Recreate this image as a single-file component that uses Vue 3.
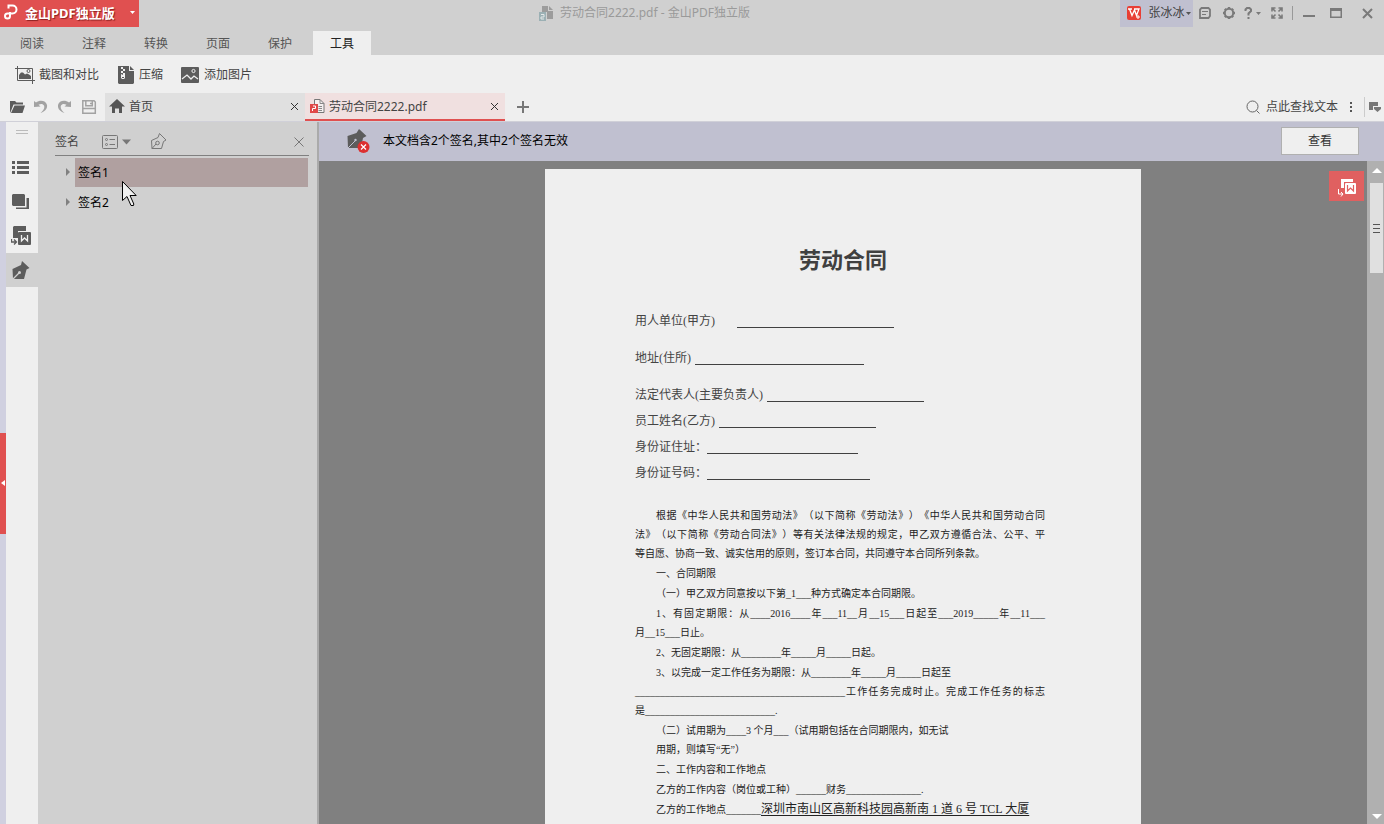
<script setup>
import { ref } from 'vue'

const menus = ['阅读', '注释', '转换', '页面', '保护', '工具']
const activeMenu = ref('工具')
const signatures = ['签名1', '签名2']
const selected = ref('签名1')

// Blank lines of the contract header; widths in pixels
const fields = [
  { label: '用人单位(甲方)', at: 102, blank: 157, space: true },
  { label: '地址(住所)', at: 60, blank: 169, space: true },
  { label: '法定代表人(主要负责人)', at: 132, blank: 157 },
  { label: '员工姓名(乙方)', at: 84, blank: 157 },
  { label: '身份证住址：', at: 72, blank: 151 },
  { label: '身份证号码：', at: 72, blank: 163 },
]

const u = (n) => '_'.repeat(n)
const clauses = [
  {
    lines: [
      { t: '根据《中华人民共和国劳动法》（以下简称《劳动法》）《中华人民共和国劳动合同', indent: true, full: true },
      { t: '法》（以下简称《劳动合同法》）等有关法律法规的规定，甲乙双方遵循合法、公平、平', full: true },
      { t: '等自愿、协商一致、诚实信用的原则，签订本合同，共同遵守本合同所列条款。' },
    ],
  },
  { lines: [{ t: '一、合同期限', indent: true }] },
  { lines: [{ t: `（一）甲乙双方同意按以下第_1${u(3)}种方式确定本合同期限。`, indent: true }] },
  {
    lines: [
      { t: `1、有固定期限：从${u(4)}2016${u(4)}年${u(3)}11__月__15${u(3)}日起至${u(3)}2019${u(5)}年__11${u(3)}`, indent: true, full: true },
      { t: `月__15${u(3)}日止。` },
    ],
  },
  { lines: [{ t: `2、无固定期限：从${u(8)}年${u(5)}月${u(5)}日起。`, indent: true }] },
  {
    lines: [
      { t: `3、以完成一定工作任务为期限：从${u(8)}年${u(5)}月${u(5)}日起至`, indent: true },
      { t: `${u(42)}工作任务完成时止。完成工作任务的标志`, full: true },
      { t: `是${u(26)}.` },
    ],
  },
  {
    lines: [
      { t: `（二）试用期为${u(4)}3 个月${u(3)}（试用期包括在合同期限内，如无试`, indent: true },
      { t: '用期，则填写“无”）', indent: true },
    ],
  },
  { lines: [{ t: '二、工作内容和工作地点', indent: true }] },
  { lines: [{ t: `乙方的工作内容（岗位或工种）${u(6)}财务${u(15)}.`, indent: true }] },
  { lines: [{ t: `乙方的工作地点${u(7)}`, indent: true, fill: '深圳市南山区高新科技园高新南 1 道 6 号 TCL 大厦' }] },
]
</script>

<template>
  <div class="app">
    <header class="titlebar">
      <button class="brand">
        <svg width="14" height="17" viewBox="0 0 14 17" fill="none" stroke="#fff" stroke-width="2">
          <path d="M4.500 4.500V1.500H8.500A4 4 0 0 1 8.500 9.500H3.500A2.500 2.500 0 1 0 6 12V8" />
        </svg>
        <span>金山PDF独立版</span>
        <svg class="brand-caret" width="5" height="3" viewBox="0 0 5 3"><path d="M0 0H5L2.500 3Z" fill="#fff" /></svg>
      </button>
      <div class="window-title">
        <svg width="15" height="15" viewBox="0 0 15 15">
          <path d="M3 0H9V5H14V13H8V6H3ZM10 0L14 4H10Z" fill="#9c9c9c" />
          <path d="M0 6H7V15H0Z" fill="#9bb0b4" />
          <path d="M2 8.500H5V11H2V13H5" fill="none" stroke="#e4e8e8" />
        </svg>
        <span>劳动合同2222.pdf - 金山PDF独立版</span>
      </div>
      <button class="user">
        <svg width="14" height="14" viewBox="0 0 14 14">
          <rect width="14" height="14" rx="2" fill="#e83e36" />
          <path d="M1 3H5M2.500 3L5 9.500L7.500 4L9.500 9.500L12 3H7" fill="none" stroke="#fff" stroke-width="1.300" />
          <path d="M11 9V13M9 11H13" stroke="#fff" />
        </svg>
        <span>张冰冰</span>
        <svg width="5" height="3" viewBox="0 0 5 3"><path d="M0 0H5L2.500 3Z" fill="#555" /></svg>
      </button>
      <button class="tool" aria-label="消息">
        <svg width="12" height="12" viewBox="0 0 12 12" fill="none" stroke="#7a7a7a">
          <path d="M1 11V2.500L2.500 1H9.500L11 2.500V9L9.500 11Z" stroke-width="1.800" />
          <path d="M3 4.500H9M3 7.500H7" />
        </svg>
      </button>
      <button class="tool" aria-label="设置">
        <svg width="14" height="14" viewBox="0 0 14 14" fill="none" stroke="#7a7a7a">
          <circle cx="7" cy="7" r="4.200" stroke-width="2" />
          <path d="M7 1V3M7 11V13M1 7H3M11 7H13M2.800 2.800L4 4M10 10L11.200 11.200M2.800 11.200L4 10M10 4L11.200 2.800" stroke-width="2.400" />
        </svg>
      </button>
      <button class="tool" aria-label="帮助">
        <svg width="18" height="12" viewBox="0 0 18 12">
          <path d="M1.500 4V2.500L3 1H5.500L7 2.500V4L4.500 6.500V8.500" fill="none" stroke="#7a7a7a" stroke-width="2" />
          <path d="M3.500 10H5.500V12H3.500ZM12 5H17L14.500 8Z" fill="#7a7a7a" />
        </svg>
      </button>
      <button class="tool" aria-label="全屏">
        <svg width="12" height="12" viewBox="0 0 12 12" fill="none" stroke="#7a7a7a" stroke-width="1.600">
          <path d="M1 4.500V1H4.500M1 1L4.500 4.500M7.500 1H11V4.500M11 1L7.500 4.500M1 7.500V11H4.500M1 11L4.500 7.500M7.500 11H11V7.500M11 11L7.500 7.500" />
        </svg>
      </button>
      <span class="bar-sep"></span>
      <button class="win" aria-label="最小化">
        <svg width="12" height="11" viewBox="0 0 12 11"><path d="M0 7H12V9H0Z" fill="#7a7a7a" /></svg>
      </button>
      <button class="win" aria-label="最大化">
        <svg width="12" height="11" viewBox="0 0 12 11"><path d="M0 0H12V10H0ZM1.500 3V8.500H10.500V3Z" fill="#7a7a7a" fill-rule="evenodd" /></svg>
      </button>
      <button class="win last" aria-label="关闭">
        <svg width="11" height="11" viewBox="0 0 11 11"><path d="M1 1L10 10M10 1L1 10" stroke="#7a7a7a" stroke-width="2" /></svg>
      </button>
    </header>

    <nav class="menu">
      <button v-for="m in menus" :key="m" :class="{ active: m === activeMenu }" @click="activeMenu = m">{{ m }}</button>
    </nav>

    <div class="ribbon">
      <button>
        <svg width="20" height="19" viewBox="0 0 20 19">
          <path d="M0 3.500H17.500V19M2.500 1V15.500H20" fill="none" stroke="#5c5c5c" />
          <path d="M4 14V10L6 7.500H8L10 9.500L12 8.500L14 9.500L16 11V14Z" fill="#5c5c5c" />
          <circle cx="13.500" cy="6" r="1.500" fill="none" stroke="#5c5c5c" />
        </svg>
        截图和对比
      </button>
      <button>
        <svg width="18" height="18" viewBox="0 0 18 18">
          <path d="M1 0H12V5H17V17L16 18H2L1 17ZM13 0L17 4H13Z" fill="#5c5c5c" />
          <path d="M4 1H6V3H4ZM6 3H8V5H6ZM4 5H6V7H4ZM6 7H8V9H6Z" fill="#efefef" />
          <path d="M4 8L6 9H8V12L7 13H5L4 12Z" fill="#efefef" />
          <path d="M5 11.500H7" stroke="#5c5c5c" />
        </svg>
        压缩
      </button>
      <button>
        <svg width="19" height="16" viewBox="0 0 19 16">
          <rect x="0" y="0" width="18" height="16" rx="1" fill="#5c5c5c" />
          <path d="M1 12L6 8L10 12L13 9L17 12" fill="none" stroke="#efefef" stroke-width="1.300" />
          <circle cx="12.500" cy="4" r="1.600" fill="none" stroke="#efefef" />
        </svg>
        添加图片
      </button>
    </div>

    <div class="tabs-row">
      <div class="quick">
        <button aria-label="打开">
          <svg width="15" height="15" viewBox="0 0 15 15"><path d="M0 13V1H5L6.500 2.500H13V4.500H3.500L1 11ZM4.500 5.500H15L12.500 13H1Z" fill="#5c5c5c" /></svg>
        </button>
        <button aria-label="撤销">
          <svg width="15" height="15" viewBox="0 0 15 15"><path d="M0 1L2 2.500C6 -0.500 12 0.500 13 5C13.600 8.500 11 11.500 6.500 13C9.500 10.500 11 8 10 5.500C9 3.500 6.500 3.500 4.500 4.800L6.500 6.500L0 7Z" fill="#a2a2a2" /></svg>
        </button>
        <button aria-label="重做">
          <svg width="15" height="15" viewBox="0 0 15 15"><path d="M13 1L11 2.500C7 -0.500 1 0.500 0 5C-0.600 8.500 2 11.500 6.500 13C3.500 10.500 2 8 3 5.500C4 3.500 6.500 3.500 8.500 4.800L6.500 6.500L13 7Z" fill="#a2a2a2" /></svg>
        </button>
        <button aria-label="保存">
          <svg width="15" height="15" viewBox="0 0 15 15" fill="none" stroke="#a2a2a2" stroke-width="1.500">
            <path d="M0.800 0.800H12L13.300 2V13.300H0.800ZM3.800 1V5.800H10.300V1M1 8.500H13" /><path d="M8 3.500H10" />
          </svg>
        </button>
      </div>
      <div class="tab">
        <svg width="16" height="15" viewBox="0 0 16 15"><path d="M8 0L16 7.500H13V14H10V9.500H6V14H3V7.500H0Z" fill="#555" /></svg>
        <a href="#">首页</a>
        <button aria-label="关闭首页"><svg width="9" height="9" viewBox="0 0 9 9"><path d="M1 1L8 8M8 1L1 8" stroke="#333" /></svg></button>
      </div>
      <div class="tab current">
        <svg width="15" height="15" viewBox="0 0 15 15">
          <path d="M4.500 6V0.500H10L14 4.500V13.500H7" fill="#f5f0f0" stroke="#777" />
          <path d="M10 0.500V4.500H14M8.500 7.500H12M8.500 9.500H12M8.500 11.500H12" fill="none" stroke="#888" />
          <path d="M0 5H8V14H0Z" fill="#e04848" />
          <path d="M2.500 12V9.500H5.500V7H3" fill="none" stroke="#fff" />
        </svg>
        <a href="#">劳动合同2222.pdf</a>
        <button aria-label="关闭文档"><svg width="9" height="9" viewBox="0 0 9 9"><path d="M1 1L8 8M8 1L1 8" stroke="#333" /></svg></button>
      </div>
      <button class="add" aria-label="新建标签">
        <svg width="12" height="12" viewBox="0 0 12 12"><path d="M6 0V12M0 6H12" stroke="#777" stroke-width="2" /></svg>
      </button>
      <button class="search">
        <svg width="14" height="14" viewBox="0 0 14 14" fill="none" stroke="#666"><circle cx="6.500" cy="6.500" r="5.500" /><path d="M10.500 10.500L13.500 13.500" /></svg>
        点此查找文本
      </button>
      <button class="more" aria-label="更多"><svg width="2" height="10" viewBox="0 0 2 10"><path d="M0 0H2V2H0ZM0 4H2V6H0ZM0 8H2V10H0Z" fill="#555" /></svg></button>
      <button class="pin" aria-label="收起">
        <svg width="12" height="11" viewBox="0 0 12 11"><path d="M0 0H9V4H4V8H0ZM5 5H12V7L8.500 10L5 7Z" fill="#777" /></svg>
      </button>
    </div>

    <div class="body">
      <div class="edge">
        <button aria-label="展开"><svg width="4" height="6" viewBox="0 0 4 6"><path d="M4 0V6L0 3Z" fill="#fff" /></svg></button>
      </div>
      <div class="rail">
        <span class="grip"></span>
        <button aria-label="目录">
          <svg width="18" height="14" viewBox="0 0 18 14"><path d="M0 0H3V3H0ZM5 0H17V3H5ZM0 5H3V8H0ZM5 5H17V8H5ZM0 10H3V13H0ZM5 10H17V13H5Z" fill="#5c5c5c" /></svg>
        </button>
        <button aria-label="缩略图">
          <svg width="18" height="16" viewBox="0 0 18 16"><path d="M1 0H12L13 1V12H1L0 11V1ZM14.500 4H17V15H4V13.500H14.500Z" fill="#5c5c5c" /></svg>
        </button>
        <button aria-label="转换为文档">
          <svg width="20" height="20" viewBox="0 0 20 20">
            <path d="M3 0H15V5H7V12H2V1Z" fill="#5c5c5c" /><rect x="7" y="6" width="13" height="13" rx="1" fill="#5c5c5c" />
            <path d="M10.500 9V15L13.500 12L16.500 15V9" fill="none" stroke="#efefef" stroke-width="1.300" />
            <path d="M0.500 13V16H5M3 13.500L5.500 16L3 18.500" fill="none" stroke="#5c5c5c" stroke-width="1.300" />
          </svg>
        </button>
        <button class="active" aria-label="签名">
          <svg width="18" height="18" viewBox="0 0 18 18">
            <path d="M10 0L17.500 7L14.500 8.500L12 18H1L0.500 8L9 4Z" fill="#5c5c5c" /><path d="M1 18L7 12" stroke="#d0d0d0" stroke-width="1.300" /><circle cx="7.500" cy="11.500" r="1.500" fill="#d0d0d0" />
          </svg>
        </button>
      </div>

      <aside class="panel">
        <div class="panel-head">
          <span>签名</span>
          <button class="list-btn" aria-label="选项">
            <svg width="30" height="14" viewBox="0 0 30 14" fill="none" stroke="#777">
              <rect x="0.500" y="0.500" width="15" height="13" rx="1" /><circle cx="4.500" cy="4.500" r="1" /><circle cx="4.500" cy="9.500" r="1" /><path d="M7.500 4.500H13M7.500 9.500H13" />
              <path d="M20 4.500H29L24.500 9.500Z" fill="#777" stroke="none" />
            </svg>
          </button>
          <button class="pen-btn" aria-label="添加签名">
            <svg width="16" height="17" viewBox="0 0 16 17" fill="none" stroke="#777">
              <path d="M8.500 0.500L15 7L12.500 8.500L10.500 15.500H1L0.500 7.500L7 4.500ZM1 15.500L5 11" /><circle cx="6.500" cy="10" r="1.800" />
            </svg>
          </button>
          <button class="panel-close" aria-label="关闭面板"><svg width="10" height="10" viewBox="0 0 10 10"><path d="M0.500 0.500L9.500 9.500M9.500 0.500L0.500 9.500" stroke="#777" /></svg></button>
        </div>
        <ul class="signs">
          <li v-for="s in signatures" :key="s">
            <svg width="4" height="8" viewBox="0 0 4 8"><path d="M0 0L4 4L0 8Z" fill="#808080" /></svg>
            <button :class="{ selected: s === selected }" @click="selected = s">{{ s }}</button>
          </li>
        </ul>
        <svg class="cursor" width="15" height="26" viewBox="0 0 15 26">
          <path d="M0.500 0.500V19.500L5 15.500L9 24.500H11.500L11.800 23L8 14.500H14.200Z" fill="#f0f0f0" stroke="#000" />
        </svg>
      </aside>

      <main class="main">
        <div class="notice">
          <svg width="23" height="24" viewBox="0 0 23 24">
            <path d="M12 0L19.500 7L16 9L14 19H1L0.500 7L9.500 4Z" fill="#5c5c5c" /><path d="M1 19L8 12" stroke="#c0c0d0" /><circle cx="8.500" cy="11" r="1.200" fill="#c0c0d0" />
            <circle cx="16.500" cy="18" r="6" fill="#dc3030" /><path d="M14 15.500L19 20.500M19 15.500L14 20.500" stroke="#fff" stroke-width="1.200" />
          </svg>
          <span>本文档含2个签名,其中2个签名无效</span>
          <button>查看</button>
        </div>
        <div class="viewer">
          <div class="canvas">
            <article class="page">
              <h1>劳动合同</h1>
              <div class="form">
                <div v-for="f in fields" :key="f.label" class="field" :class="{ spaced: f.space }">
                  <span class="label" :style="{ width: f.at + 'px' }">{{ f.label }}</span>
                  <span class="blank" :style="{ width: f.blank + 'px' }"></span>
                </div>
              </div>
              <div class="clauses">
                <p v-for="(c, i) in clauses" :key="i">
                  <span v-for="(l, j) in c.lines" :key="j" class="line" :class="{ indent: l.indent, full: l.full }">{{ l.t }}<u v-if="l.fill">{{ l.fill }}</u></span>
                </p>
                <p class="tail">1005</p>
              </div>
            </article>
          </div>
          <div class="scroll">
            <svg width="10" height="5" viewBox="0 0 10 5"><path d="M5 0L10 5H0Z" fill="#fff" /></svg>
            <div class="thumb"><i></i><i></i><i></i></div>
            <svg class="down" width="10" height="5" viewBox="0 0 10 5"><path d="M0 0H10L5 5Z" fill="#fff" /></svg>
          </div>
          <button class="float" aria-label="转换为文档">
            <svg width="18" height="18" viewBox="0 0 18 18">
              <path d="M3 0H15V3H6V9H3Z" fill="#fff" /><rect x="7" y="4" width="11" height="11" rx="1" fill="#fff" />
              <path d="M9.500 6V12L12.500 9L15.500 12V6" fill="none" stroke="#e06060" stroke-width="1.200" />
              <path d="M0.500 10V15H5M3 13L5 15L3 17.500" fill="none" stroke="#fff" />
            </svg>
          </button>
        </div>
      </main>
    </div>
  </div>
</template>

<style>
body { margin: 0; }
</style>

<style scoped>
.app {
  height: 100vh;
  display: flex;
  flex-direction: column;
  overflow: hidden;
  background: #efefef;
  color: #444;
  font: 12px/16px "Noto Sans", "Noto Sans CJK SC", sans-serif;
}
.app *, .app *::before { box-sizing: border-box; }
button {
  font: inherit;
  color: inherit;
  border: 0;
  padding: 0;
  background: none;
  display: flex;
  align-items: center;
  justify-content: center;
  white-space: nowrap;
}
svg { display: block; flex: none; }
a { color: inherit; text-decoration: none; }

.titlebar { display: flex; height: 27px; background: #d0d0d0; flex: none; }
.titlebar > * { padding-bottom: 1px; }
.brand {
  background: #e05050;
  color: #fff;
  width: 139px;
  padding: 0 4px 2px;
  justify-content: flex-start;
  gap: 7px;
  font-size: 13px;
  font-weight: 700;
  text-shadow: 1px 1px 1px #8c2020;
}
.brand-caret { margin-left: auto; }
.window-title {
  flex: 1;
  display: flex;
  align-items: center;
  justify-content: center;
  gap: 6px;
  padding-left: 30px;
  color: #9a9a9a;
}
.user { width: 73px; background: #c0c0d0; gap: 7px; padding-left: 5px; }
.user span { margin-right: -6px; }
.tool { width: 24px; }
.bar-sep { width: 1px; height: 14px; background: #999; margin: 6px 2px 0 3px; }
.win { width: 27px; }
.win.last { width: 35px; padding-left: 2px; }

.menu { display: flex; gap: 4px; height: 28px; padding: 4px 3px 0; background: #d0d0d0; flex: none; }
.menu button { width: 58px; color: #555; padding-top: 2px; }
.menu .active { background: #efefef; color: #222; }

.ribbon { display: flex; gap: 18px; height: 38px; padding-left: 15px; flex: none; }
.ribbon button { gap: 4px; padding-top: 1px; }

.tabs-row { display: flex; height: 29px; border-bottom: 1px solid #d0d0d8; flex: none; }
.quick { display: flex; gap: 9px; padding: 0 8px 0 10px; }
.tab { width: 200px; display: flex; align-items: center; gap: 4px; padding: 0 6px 1px 4px; background: #e0e0e0; }
.tab button { margin-left: auto; }
.tab.current { background: #f0e0e0; border-bottom: 2px solid #e05050; padding: 1px 6px 0 5px; }
.add { width: 36px; }
.search { margin-left: auto; gap: 6px; }
.more { width: 26px; }
.pin { width: 20px; border-left: 1px solid #ccc; margin: 4px 0; }

.body { flex: 1; min-height: 0; display: flex; background: #d0d0d0; }
.edge { width: 6px; background: #d0d0e0; display: flex; align-items: center; padding-top: 20px; }
.edge button { width: 6px; height: 101px; background: #e05050; }
.rail { width: 32px; background: #efefef; display: flex; flex-direction: column; }
.grip { height: 4px; width: 12px; margin: 8px 10px 17px; border-top: 1px solid #bbb; border-bottom: 1px solid #bbb; }
.rail button { height: 34px; padding-right: 2px; }
.rail .active { background: #d0d0d0; }

.panel { width: 281px; border-right: 2px solid #aaa; padding: 0 8px 0 17px; position: relative; }
.panel-head { display: flex; align-items: center; height: 34px; padding-top: 6px; border-bottom: 1px solid #808080; }
.list-btn { margin-left: 23px; }
.pen-btn { margin-left: 19px; }
.panel-close { margin-left: auto; margin-right: 5px; }
.signs { list-style: none; margin: 0; padding: 1px 1px 0 11px; }
.signs li { display: flex; align-items: center; gap: 5px; height: 30px; color: #000; }
.signs button { flex: 1; height: 29px; justify-content: flex-start; padding: 1px 0 0 3px; }
.signs .selected { background: #b0a0a0; }
.cursor { position: absolute; left: 84px; top: 59px; }

.main { flex: 1; min-width: 0; display: flex; flex-direction: column; }
.notice { height: 39px; flex: none; display: flex; align-items: center; gap: 13px; padding: 0 25px 1px 28px; background: #c0c0d0; color: #000; }
.notice button { margin-left: auto; width: 78px; height: 28px; background: #efefef; border: 1px solid #b0b0b0; color: #333; }
.viewer { flex: 1; min-height: 0; display: flex; background: #808080; position: relative; }
.canvas { flex: 1; min-width: 0; overflow: hidden; padding-top: 8px; }
.float { position: absolute; top: 10px; right: 20px; width: 35px; height: 30px; padding-top: 3px; background: #e06060; }
.scroll { width: 17px; background: #b0b0b0; display: flex; flex-direction: column; align-items: center; padding: 7px 0 5px 2px; }
.thumb { width: 13px; height: 90px; margin-top: 10px; background: #e0e0e0; display: flex; flex-direction: column; align-items: center; justify-content: center; gap: 3px; }
.thumb i { width: 7px; height: 1px; background: #555; }
.down { margin-top: auto; }

.page {
  width: 596px;
  margin: 0 auto;
  padding: 77px 96px 60px 90px;
  background: #efefef;
  color: #222;
  font-family: "Liberation Serif", "Noto Sans CJK SC", serif;
  text-spacing-trim: space-all;
}
h1 { margin: 0 0 32px; padding-left: 6px; text-align: center; font-size: 22px; line-height: 30px; color: #404040; }
.field { display: flex; height: 26px; align-items: center; }
.field.spaced { margin-bottom: 11px; }
.label { white-space: nowrap; color: #444; }
.blank { height: 14px; border-bottom: 1px solid #404040; }
.clauses { margin-top: 20px; font-size: 10px; line-height: 19px; }
.clauses p { margin: 0 0 1px; }
.line { display: block; white-space: nowrap; }
.indent { padding-left: 21px; }
.full { text-align: justify; text-align-last: justify; }
u { font-size: 12px; text-underline-offset: 2px; }
.clauses .tail { font-size: 12px; line-height: 16px; color: #777; }
</style>
